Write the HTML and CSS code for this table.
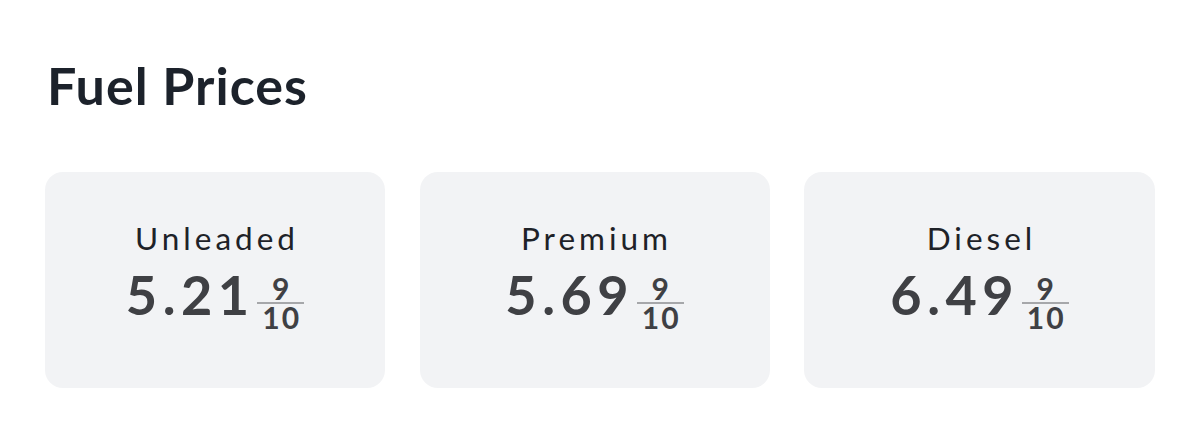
FILE: index.html
```html
<!DOCTYPE html>
<html lang="en">
<head>
<meta charset="utf-8">
<title>Fuel Prices</title>
<link rel="stylesheet" href="styles.css">
</head>
<body>
<main class="page">
  <h1 class="title">Fuel Prices</h1>
  <section class="cards">
    <div class="card">
      <div class="label">Unleaded</div>
      <div class="price">
        <span class="whole">5.21</span>
        <span class="frac"><span class="num">9</span><span class="den">10</span></span>
      </div>
    </div>
    <div class="card">
      <div class="label">Premium</div>
      <div class="price">
        <span class="whole">5.69</span>
        <span class="frac"><span class="num">9</span><span class="den">10</span></span>
      </div>
    </div>
    <div class="card">
      <div class="label">Diesel</div>
      <div class="price">
        <span class="whole">6.49</span>
        <span class="frac"><span class="num">9</span><span class="den">10</span></span>
      </div>
    </div>
  </section>
</main>
</body>
</html>
```
FILE: styles.css
```css
* { box-sizing: border-box; }
html, body { margin: 0; padding: 0; background: #ffffff; }
body { font-family: "Lato", "Liberation Sans", sans-serif; }

.page {
  padding: 59px 45px 0 45px;
}

.title {
  margin: 0 0 61px 2px;
  font-size: 52px;
  line-height: 1;
  font-weight: 700;
  letter-spacing: 1px;
  color: #1c222b;
}

.cards {
  display: grid;
  grid-template-columns: 340px 350px 351px;
  column-gap: 34.5px;
}

.card {
  height: 216px;
  background: #f2f3f5;
  border-radius: 18px;
  display: flex;
  flex-direction: column;
  align-items: center;
  justify-content: center;
  padding-bottom: 8.5px;
}

.label {
  font-size: 31.5px;
  line-height: 1;
  letter-spacing: 4px;
  margin-right: -4px;
  color: #1e2228;
}

.price {
  display: flex;
  align-items: flex-start;
  margin-top: 14px;
  color: #3f4044;
}

.whole {
  font-size: 54px;
  font-weight: 700;
  line-height: 1;
  letter-spacing: 5.5px;
}

.frac {
  display: flex;
  flex-direction: column;
  align-items: center;
  margin-left: 2.5px;
  margin-top: 8px;
  width: 47px;
  font-size: 30px;
  font-weight: 700;
  line-height: 0.8;
}

.num {
  display: block;
  width: 100%;
  text-align: center;
  padding-bottom: 2px;
  border-bottom: 2.5px solid #a6a7aa;
}

.den {
  display: block;
  margin-top: 0.5px;
  letter-spacing: 2px;
  margin-right: -2px;
}
```
